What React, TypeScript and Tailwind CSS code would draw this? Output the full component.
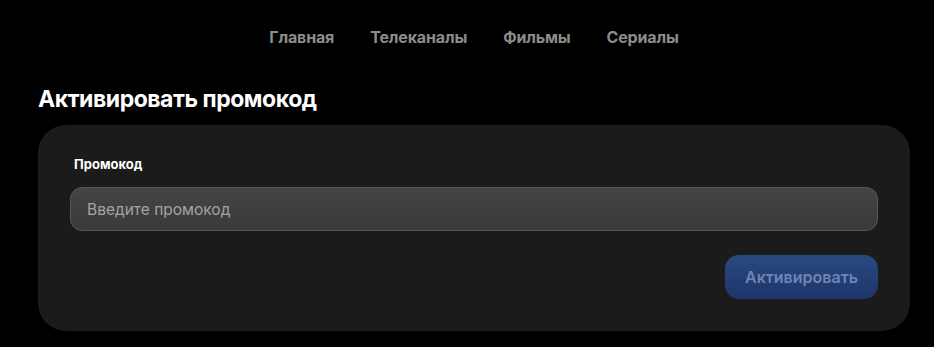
export default function App() {
  const nav = ['Главная', 'Телеканалы', 'Фильмы', 'Сериалы'];

  return (
    <div className="min-h-[347px] bg-black font-['Inter',sans-serif] text-white">
      <nav className="flex h-[74px] items-center justify-center gap-9 pl-[14px]">
        {nav.map((item) => (
          <a key={item} href="#" className="text-[16px] font-bold tracking-[-0.01em] text-[#8c8c8c]">
            {item}
          </a>
        ))}
      </nav>

      <div className="px-[38px] pt-[12px]">
        <h1 className="text-[23px] font-bold leading-[26px] tracking-[-0.02em] text-white">
          Активировать промокод
        </h1>

        <div className="mt-[13px] w-[872px] rounded-[28px] bg-[#1b1b1b] px-8 pb-8 pt-[31px]">
          <label className="block pl-1 text-[13px] font-bold leading-[16px] text-white">Промокод</label>
          <input
            type="text"
            placeholder="Введите промокод"
            className="mt-[15px] h-[44px] w-full rounded-[12px] border border-[#575757] bg-gradient-to-b from-[#454545] to-[#393939] px-4 text-[15.5px] text-white outline-none placeholder:text-[#a3a3a3]"
          />
          <div className="mt-6 flex justify-end">
            <button className="h-[44px] w-[153px] rounded-[14px] bg-gradient-to-b from-[#284a80] to-[#1f356c] text-[16px] font-semibold text-[#6f85b3]">
              Активировать
            </button>
          </div>
        </div>
      </div>
    </div>
  );
}
